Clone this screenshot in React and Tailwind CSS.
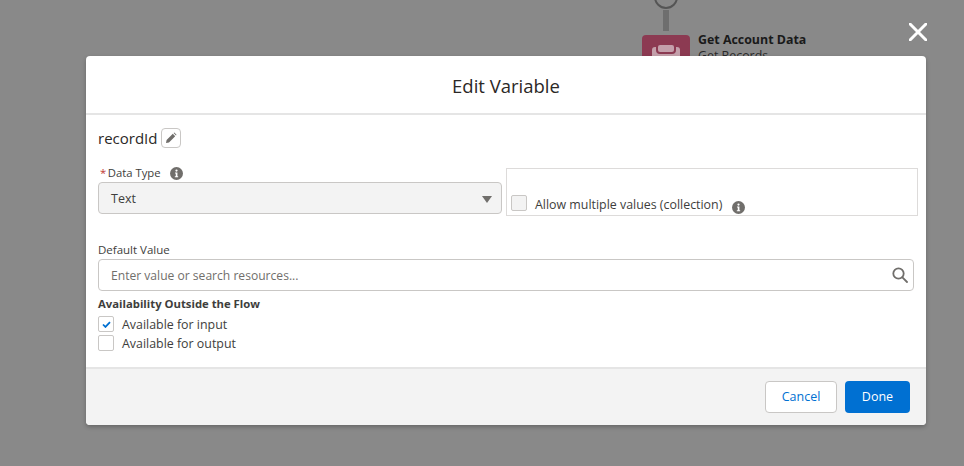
import React from "react";

function InfoIcon({ className }) {
  return (
    <svg viewBox="0 0 14 14" className={className}>
      <circle cx="7" cy="7" r="7" fill="#706e6b" />
      <circle cx="7" cy="3.9" r="1.2" fill="#fff" />
      <path d="M5.4 6h2.6v4h.8v1.1H5.2V10h1V7.1h-.8z" fill="#fff" />
    </svg>
  );
}

function Canvas() {
  return (
    <>
      <div className="absolute left-[654px] top-[-15px] w-[24px] h-[24px] rounded-full border-2 border-[#555] flex justify-center">
        <div className="w-[2px] h-[12px] bg-[#555]" />
      </div>
      <div className="absolute left-[663px] top-[10px] w-[6px] h-[21px] bg-[#6e6e6e]" />
      <div className="absolute left-[642px] top-[35px] w-[48px] h-[48px] rounded bg-[#8c3a52] flex justify-center pt-[12px]">
        <div className="relative w-[28px] h-[34px] rounded-[3px] bg-[#c4a0ab]">
          <div className="absolute left-[4px] top-[-4px] w-[20px] h-[11px] rounded-[4px] bg-[#c4a0ab] border-2 border-[#8c3a52]" />
        </div>
      </div>
      <div className="absolute left-[698px] top-[31px] text-[12.4px] leading-[18px] font-bold text-[#1a1a1a] whitespace-nowrap">
        Get Account Data
      </div>
      <div className="absolute left-[698px] top-[47px] text-[12.4px] leading-[18px] text-[#2a2a2a] whitespace-nowrap">
        Get Records
      </div>
      <svg viewBox="0 0 18 18" className="absolute left-[909px] top-[23px] w-[18px] h-[18px]">
        <path d="M1 1l16 16M17 1L1 17" stroke="#fff" strokeWidth="3" strokeLinecap="round" />
      </svg>
    </>
  );
}

export default function App() {
  return (
    <div className="relative w-[964px] h-[466px] overflow-hidden bg-[#898989] pt-[56px] pl-[86px] text-[#3e3e3c] font-['Open_Sans','Noto_Sans',sans-serif]">
      <Canvas />
      <div className="relative w-[840px] h-[369px] rounded bg-white shadow-[0_2px_4px_rgba(0,0,0,0.25)] flex flex-col overflow-hidden">
        <div className="h-[59px] shrink-0 border-b-2 border-[#e5e5e5] flex items-center justify-center pt-[2px] text-[18.5px] text-[#2b2826]">
          Edit Variable
        </div>

        <div className="flex-1 pl-[12px] pr-[8px]">
          <div className="flex items-center h-[20px] mt-[13px]">
            <span className="text-[15px] text-[#2b2826]">recordId</span>
            <button className="ml-[4px] w-[20px] h-[20px] rounded border border-[#c9c7c5] flex items-center justify-center">
              <svg viewBox="0 0 12 12" className="w-[12px] h-[12px]">
                <path d="M1 11l.6-3L7.8 1.8l2.4 2.4L4 10.4zM8.6 1l.7-.5 2.2 2.2-.5.7z" fill="#706e6b" />
              </svg>
            </button>
          </div>

          <div className="flex gap-[4px] mt-[20px]">
            <div className="w-[404px]">
              <div className="flex items-center h-[14px] -mt-[2px] mb-[2px] text-[11.3px] leading-none">
                <span className="text-[#c23934] ml-[2px] mr-[1.5px]">*</span>
                <span>Data Type</span>
                <InfoIcon className="ml-[9px] w-[13px] h-[13px]" />
              </div>
              <div className="h-[32px] rounded border border-[#c9c7c5] bg-[#f3f3f3] flex items-center justify-between pl-[12px] pr-[9px] pt-[2px] text-[12.5px]">
                <span>Text</span>
                <div className="w-0 h-0 border-x-[5.5px] border-x-transparent border-t-[7px] border-t-[#706e6b]" />
              </div>
            </div>
            <div className="w-[412px] h-[48px] border border-[#dddbda] flex items-center pl-[4px] pt-[21px] text-[12.4px]">
              <div className="w-[16px] h-[16px] rounded-[2px] border border-[#c9c7c5] bg-[#f3f3f3]" />
              <span className="ml-[8px] mt-[6px]">Allow multiple values (collection)</span>
              <InfoIcon className="ml-[10px] mt-[10px] w-[13px] h-[13px]" />
            </div>
          </div>

          <div className="text-[11.5px] leading-[14px] mt-[27px]">Default Value</div>
          <div className="mt-[2px] w-[816px] h-[32px] rounded border border-[#c9c7c5] flex items-center justify-between pl-[12px] pr-[5px]">
            <span className="text-[12.1px] pt-[2px] text-[#706e6b]">Enter value or search resources...</span>
            <svg viewBox="0 0 16 16" className="w-[16px] h-[16px]" fill="none" stroke="#706e6b" strokeWidth="1.8">
              <circle cx="6.5" cy="6.5" r="5.2" />
              <path d="M10.4 10.4L15 15" strokeLinecap="round" />
            </svg>
          </div>

          <div className="text-[11.3px] leading-[14px] font-bold mt-[6px]">Availability Outside the Flow</div>
          <div className="flex flex-col gap-[3px] mt-[5px] text-[12.4px]">
            <div className="flex items-center h-[16px]">
              <div className="w-[16px] h-[16px] rounded-[2px] border border-[#c9c7c5] flex items-center justify-center">
                <svg viewBox="0 0 10 8" className="w-[9px] h-[7px]">
                  <path d="M1 4l2.8 2.8L9 1.2" fill="none" stroke="#0070d2" strokeWidth="2" />
                </svg>
              </div>
              <span className="ml-[8px] pt-[2px]">Available for input</span>
            </div>
            <div className="flex items-center h-[16px]">
              <div className="w-[16px] h-[16px] rounded-[2px] border border-[#c9c7c5]" />
              <span className="ml-[8px] pt-[2px]">Available for output</span>
            </div>
          </div>
        </div>

        <div className="h-[58px] shrink-0 border-t-2 border-[#e5e5e5] bg-[#f3f3f3] flex items-center justify-end gap-[8px] pr-[16px] text-[12.5px]">
          <button className="w-[72px] h-[32px] rounded border border-[#c9c7c5] bg-white text-[#0070d2]">Cancel</button>
          <button className="w-[65px] h-[32px] rounded bg-[#0070d2] text-white">Done</button>
        </div>
      </div>
    </div>
  );
}
